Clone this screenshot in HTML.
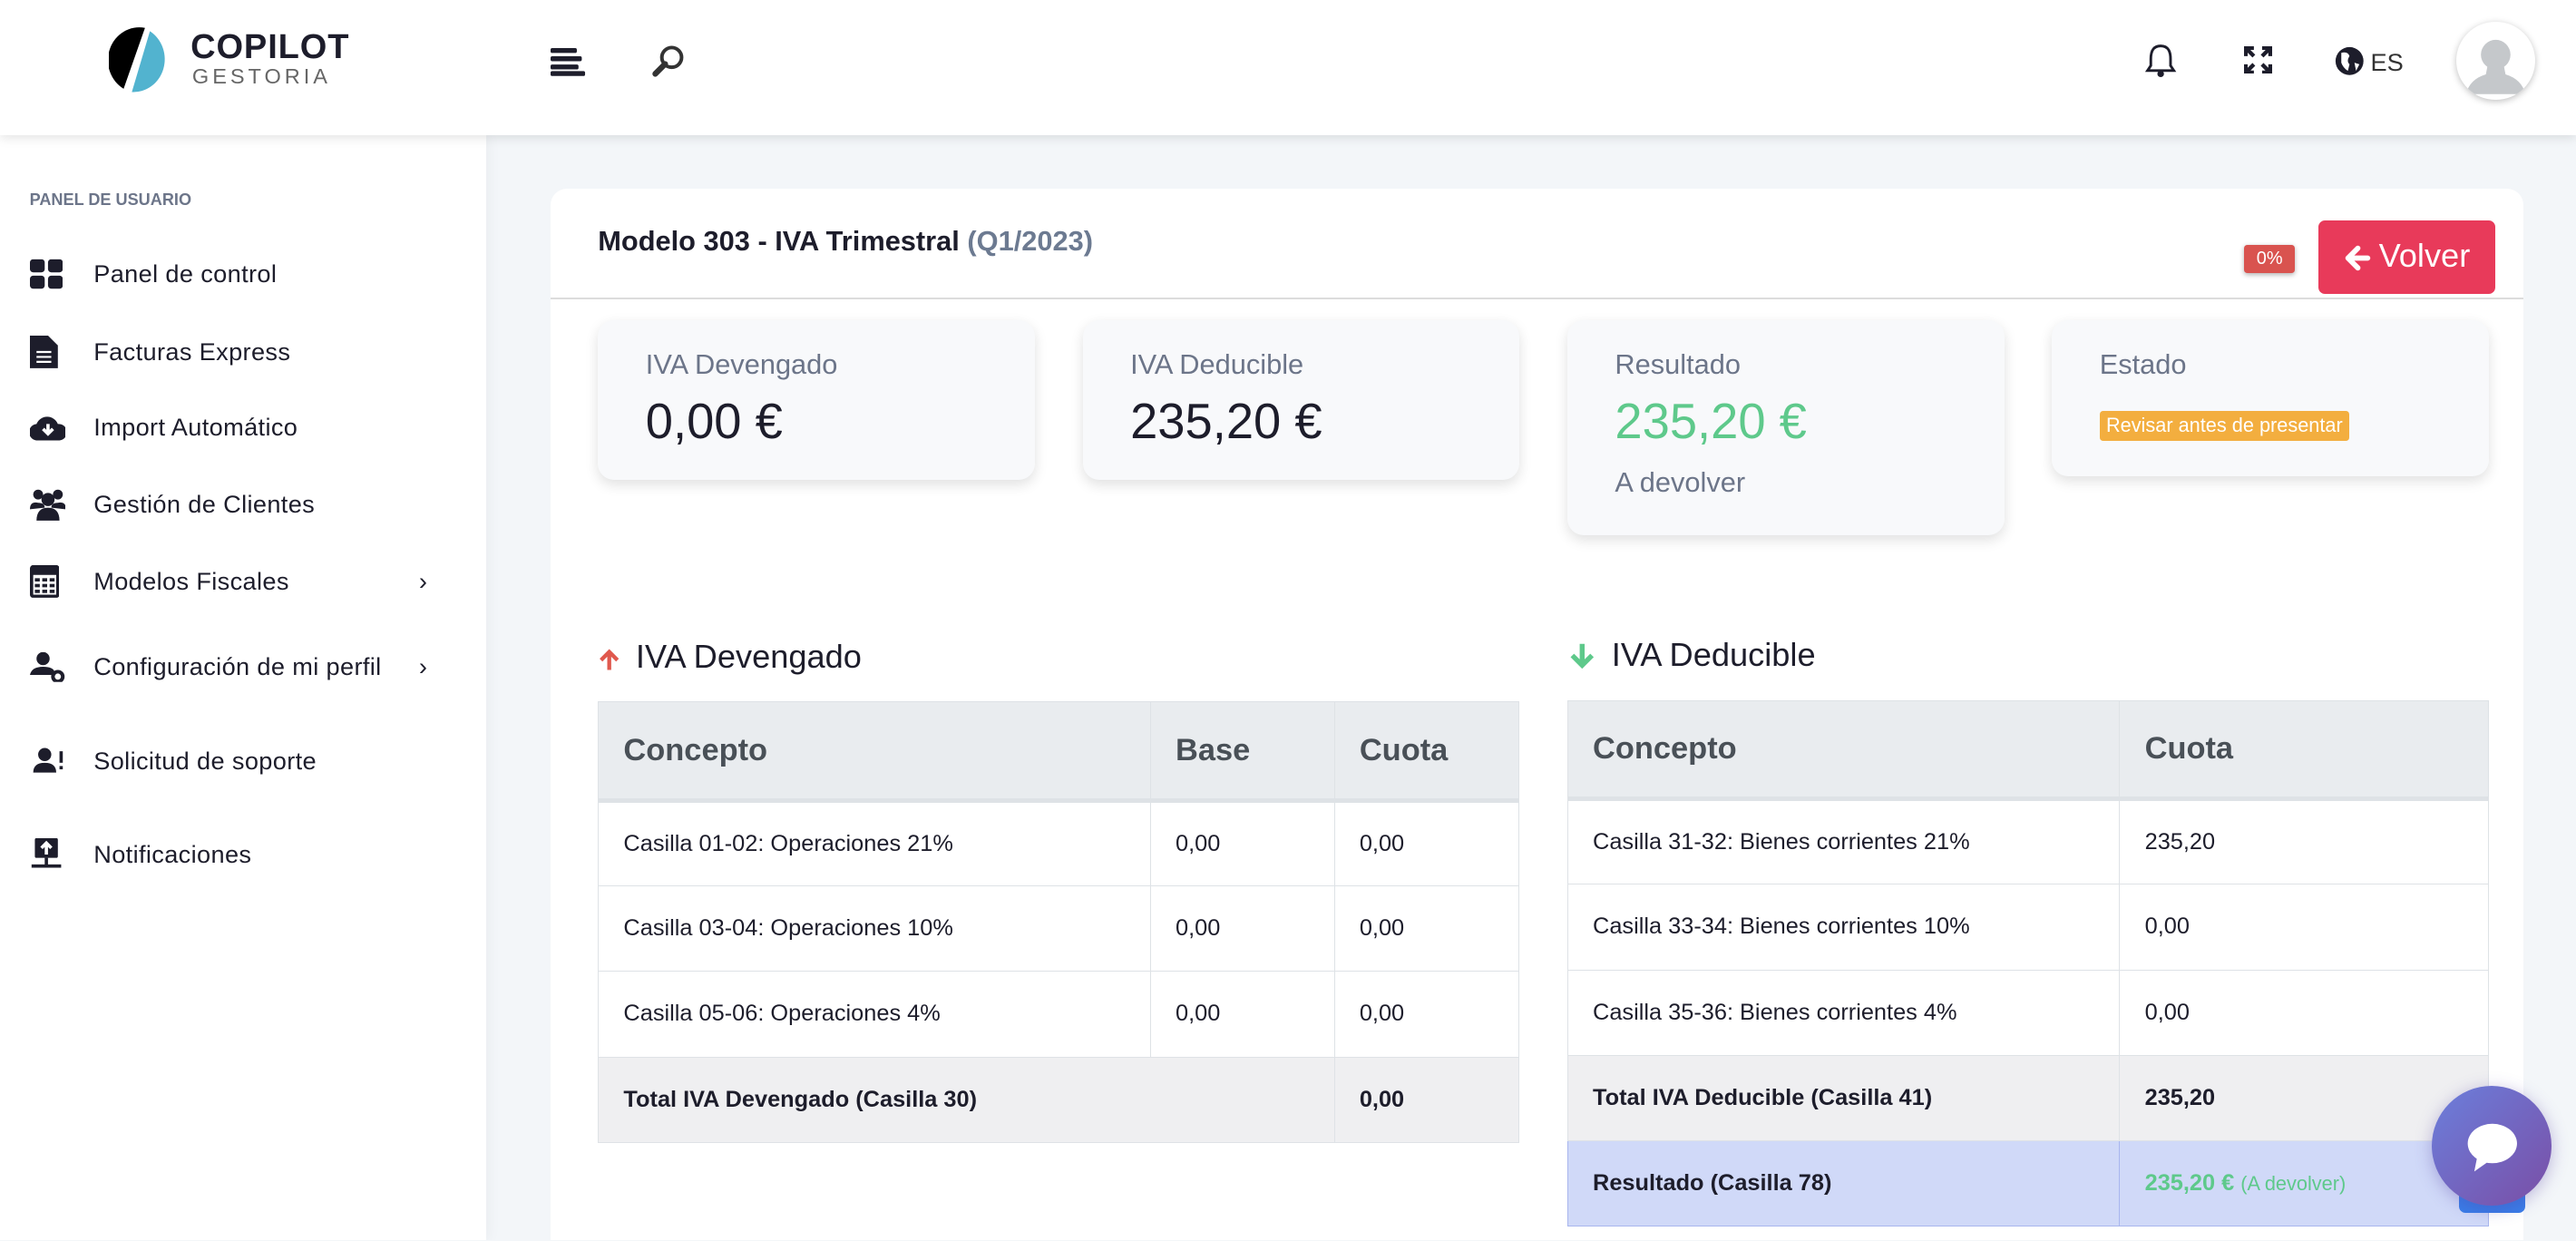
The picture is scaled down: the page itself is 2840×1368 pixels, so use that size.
<!DOCTYPE html>
<html><head><meta charset="utf-8"><style>
*{margin:0;padding:0;box-sizing:border-box}
html,body{width:2840px;height:1368px;overflow:hidden;background:#f3f6f9}
#z{zoom:1.8112;width:1568px;height:755px;position:relative;font-family:"Liberation Sans",sans-serif;color:#1d1d2b;overflow:hidden}
.a{position:absolute}
.hdr{left:0;top:0;width:1568px;height:82px;background:#fff;box-shadow:0 2px 6px rgba(0,0,0,.1);z-index:3}
.side{left:0;top:82px;width:296px;height:673px;background:#fff;box-shadow:2px 0 8px rgba(0,0,0,.04)}
.mi{position:absolute;left:57px;font-size:15px;color:#1d1d2b;transform:translateY(-50%);letter-spacing:.2px}
.ic{position:absolute;left:18px;transform:translateY(-50%)}
.chev{position:absolute;left:255px;font-size:15px;transform:translateY(-50%)}
.card{left:335px;top:115px;width:1201px;height:660px;background:#fff;border-radius:10px}
.st{position:absolute;top:195px;width:266px;background:#f8f9fb;border-radius:10px;box-shadow:0 3px 8px rgba(0,0,0,.12)}
.st .l{position:absolute;left:29px;top:17px;font-size:17px;color:#6c7589}
.st .v{position:absolute;left:29px;top:44px;font-size:30px;color:#1d1d2b}
table{position:absolute;border-collapse:collapse;font-size:14px}
td,th{border:1px solid #dee2e6;padding:0 15px;text-align:left;vertical-align:middle}
th{background:#e9ecef;height:60px;font-size:19px;color:#495057;border-bottom:3px solid #dee2e6}
td{height:52px;background:#fff}
tr.t td{background:#efeff1;font-weight:bold}
tr.r td{background:#d0d9f8;border-color:#a8b6ee;font-weight:bold}
</style></head><body><div id="z">
<div class="a hdr">
 <svg class="a" style="left:66px;top:16px" width="42" height="42" viewBox="0 0 42 42"><path d="M22 1 A19 20 0 0 0 9 38 Z" fill="#000"/><path d="M25 3 A19 20 0 0 1 14 40 Z" fill="#52b3cf"/></svg>
 <div class="a" style="left:116px;top:17px;font-size:21px;font-weight:bold;letter-spacing:.5px">COPILOT</div>
 <div class="a" style="left:117px;top:39px;font-size:13px;color:#666;letter-spacing:2.2px">GESTORIA</div>
 <svg class="a" style="left:335px;top:29px" width="22" height="18"><rect x="0" y="0" width="16" height="3" rx="1" fill="#1d1d2b"/><rect x="0" y="5" width="19" height="3" rx="1" fill="#1d1d2b"/><rect x="0" y="10" width="17" height="3" rx="1" fill="#1d1d2b"/><rect x="0" y="14" width="21" height="3" rx="1" fill="#1d1d2b"/></svg>
 <svg class="a" style="left:396px;top:26px" width="22" height="22"><circle cx="13" cy="9" r="6" fill="none" stroke="#333" stroke-width="2.2"/><path d="M9 13 L3 19" stroke="#333" stroke-width="3.5" stroke-linecap="round"/></svg>
 <svg class="a" style="left:1305px;top:26px" width="20" height="22"><path d="M10 2 C5 2 4 6 4 10 L4 14 L2 17 L18 17 L16 14 L16 10 C16 6 15 2 10 2 Z" fill="none" stroke="#1d1d2b" stroke-width="1.6"/><circle cx="10" cy="19" r="2" fill="#1d1d2b"/></svg>
 <svg class="a" style="left:1366px;top:28px" width="17" height="17" fill="none" stroke="#1d1d2b" stroke-width="2.4"><path d="M1 6V1h5M11 1h5v5M16 11v5h-5M6 16H1v-5M2 2l4 4M15 2l-4 4M15 15l-4-4M2 15l4-4"/></svg>
 <svg class="a" style="left:1421px;top:28px" width="18" height="18"><circle cx="9" cy="9" r="8.5" fill="#1d1d2b"/><path d="M4 4 Q8 3 9 6 Q7 9 9 11 L8 15 Q5 13 4 10 Z M12 10 L15 11 L13 15 Z" fill="#fff"/></svg>
 <div class="a" style="left:1443px;top:29px;font-size:15px;color:#333">ES</div>
 <div class="a" style="left:1495px;top:13px;width:48px;height:48px;border-radius:50%;background:#fff;box-shadow:0 1px 4px rgba(0,0,0,.25);overflow:hidden">
  <svg width="48" height="48"><circle cx="24" cy="20" r="9" fill="#c5c8cb"/><path d="M19 27 L29 27 L30 32 Q40 35 42 44 L6 44 Q8 35 18 32 Z" fill="#c5c8cb"/></svg></div>
</div>
<div class="a side">
 <div class="a" style="left:18px;top:34px;font-size:10px;font-weight:bold;color:#6c7589">PANEL DE USUARIO</div>
</div>
<div class="a" style="left:0;top:0;width:296px;height:755px">
 <svg class="ic" style="top:167px" width="20" height="18"><rect x="0" y="0" width="9" height="8" rx="2" fill="#1d1d2b"/><rect x="11" y="0" width="9" height="8" rx="2" fill="#1d1d2b"/><rect x="0" y="10" width="9" height="8" rx="2" fill="#1d1d2b"/><rect x="11" y="10" width="9" height="8" rx="2" fill="#1d1d2b"/></svg><div class="mi" style="top:167px">Panel de control</div>
 <svg class="ic" style="top:214px" width="18" height="20"><path d="M0 0h11l6 6v14H0z" fill="#1d1d2b"/><path d="M4 10h9M4 13h9M4 16h9" stroke="#fff" stroke-width="1.2"/></svg><div class="mi" style="top:214px">Facturas Express</div>
 <svg class="ic" style="top:260px" width="22" height="16"><path d="M5 16 A5 5 0 0 1 4 6 A7 7 0 0 1 17 6 A5 5 0 0 1 18 16 Z" fill="#1d1d2b"/><path d="M11 6v6M8 9l3 3 3-3" stroke="#fff" stroke-width="2" fill="none"/></svg><div class="mi" style="top:260px">Import Automático</div>
 <svg class="ic" style="top:307px" width="22" height="20"><circle cx="5" cy="4" r="3" fill="#1d1d2b"/><circle cx="17" cy="4" r="3" fill="#1d1d2b"/><circle cx="11" cy="7" r="4" fill="#1d1d2b"/><path d="M0 13 Q0 8 5 9 Q9 9 9 12 Z M13 12 Q13 9 17 9 Q22 8 22 13Z M4 20 Q4 12 11 12 Q18 12 18 20Z" fill="#1d1d2b"/></svg><div class="mi" style="top:307px">Gestión de Clientes</div>
 <svg class="ic" style="top:354px" width="18" height="20"><rect x="1" y="1" width="16" height="18" rx="1" fill="none" stroke="#1d1d2b" stroke-width="2"/><rect x="1" y="1" width="16" height="5" fill="#1d1d2b"/><g fill="#1d1d2b"><rect x="3" y="8" width="3" height="2"/><rect x="7.5" y="8" width="3" height="2"/><rect x="12" y="8" width="3" height="2"/><rect x="3" y="11.5" width="3" height="2"/><rect x="7.5" y="11.5" width="3" height="2"/><rect x="12" y="11.5" width="3" height="2"/><rect x="3" y="15" width="3" height="2"/><rect x="7.5" y="15" width="3" height="2"/><rect x="12" y="15" width="3" height="2"/></g></svg><div class="mi" style="top:354px">Modelos Fiscales</div><div class="chev" style="top:354px">›</div>
 <svg class="ic" style="top:406px" width="22" height="18"><circle cx="8" cy="4" r="4" fill="#1d1d2b"/><path d="M0 14 Q1 9 8 9 Q14 9 15 12 L15 14Z" fill="#1d1d2b"/><circle cx="17" cy="15" r="3" fill="none" stroke="#1d1d2b" stroke-width="2.2"/></svg><div class="mi" style="top:406px">Configuración de mi perfil</div><div class="chev" style="top:406px">›</div>
 <svg class="ic" style="top:463px" width="22" height="16"><circle cx="9" cy="4" r="4" fill="#1d1d2b"/><path d="M2 15 Q2 9 9 9 Q16 9 16 15Z" fill="#1d1d2b"/><rect x="18" y="2" width="2" height="7" fill="#1d1d2b"/><rect x="18" y="11" width="2" height="2" fill="#1d1d2b"/></svg><div class="mi" style="top:463px">Solicitud de soporte</div>
 <svg class="ic" style="top:520px" width="20" height="20"><rect x="3" y="0" width="14" height="12" rx="1" fill="#1d1d2b"/><path d="M10 10V3M7 6l3-3 3 3" stroke="#fff" stroke-width="2" fill="none"/><path d="M10 12v5M1 17h18" stroke="#1d1d2b" stroke-width="2"/></svg><div class="mi" style="top:520px">Notificaciones</div>
</div>
<div class="a card">
 <div class="a" style="left:29px;top:22px;font-size:17px;font-weight:bold">Modelo 303 - IVA Trimestral <span style="color:#6c7a91">(Q1/2023)</span></div>
 <div class="a" style="left:0;top:66px;width:1201px;height:1px;background:#dcdcdc"></div>
 <div class="a" style="left:1031px;top:34px;width:31px;height:17px;background:#d9534f;color:#fff;font-size:11px;text-align:center;line-height:17px;border-radius:2px;box-shadow:0 1px 3px rgba(0,0,0,.3)">0%</div>
 <div class="a" style="left:1076px;top:19px;width:108px;height:45px;background:#e83a5a;border-radius:4px">
  <svg class="a" style="left:16px;top:15px" width="16" height="16"><path d="M14 8H3M8 2L2 8l6 6" stroke="#fff" stroke-width="3.2" fill="none" stroke-linecap="round" stroke-linejoin="round"/></svg>
  <div class="a" style="left:37px;top:10px;color:#fff;font-size:20px;white-space:nowrap">Volver</div>
 </div>
</div>
<div class="st" style="left:364px;height:97px"><div class="l">IVA Devengado</div><div class="v">0,00 €</div></div>
<div class="st" style="left:659px;height:97px"><div class="l">IVA Deducible</div><div class="v">235,20 €</div></div>
<div class="st" style="left:954px;height:131px"><div class="l">Resultado</div><div class="v" style="color:#5ec98b">235,20 €</div><div class="l" style="top:89px">A devolver</div></div>
<div class="st" style="left:1249px;height:95px"><div class="l">Estado</div><div class="a" style="left:29px;top:55px;background:#f3ae3f;color:#fff;font-size:12px;padding:2px 4px;border-radius:2px">Revisar antes de presentar</div></div>
<svg class="a" style="left:364px;top:395px" width="14" height="14"><path d="M7 13V3M2 7l5-5 5 5" stroke="#e0584d" stroke-width="2.4" fill="none"/></svg>
<div class="a" style="left:387px;top:388px;font-size:20px">IVA Devengado</div>
<svg class="a" style="left:954px;top:391px" width="18" height="16"><path d="M9 1v13M3 8l6 6 6-6" stroke="#5ec98b" stroke-width="3" fill="none"/></svg>
<div class="a" style="left:981px;top:387px;font-size:20px">IVA Deducible</div>
<table style="left:364px;top:427px;width:561px">
<tr><th style="width:336px">Concepto</th><th style="width:112px">Base</th><th>Cuota</th></tr>
<tr><td>Casilla 01-02: Operaciones 21%</td><td>0,00</td><td>0,00</td></tr>
<tr><td>Casilla 03-04: Operaciones 10%</td><td>0,00</td><td>0,00</td></tr>
<tr><td>Casilla 05-06: Operaciones 4%</td><td>0,00</td><td>0,00</td></tr>
<tr class="t"><td colspan="2">Total IVA Devengado (Casilla 30)</td><td>0,00</td></tr>
</table>
<table style="left:954px;top:426px;width:561px">
<tr><th style="width:336px">Concepto</th><th>Cuota</th></tr>
<tr><td>Casilla 31-32: Bienes corrientes 21%</td><td>235,20</td></tr>
<tr><td>Casilla 33-34: Bienes corrientes 10%</td><td>0,00</td></tr>
<tr><td>Casilla 35-36: Bienes corrientes 4%</td><td>0,00</td></tr>
<tr class="t"><td>Total IVA Deducible (Casilla 41)</td><td>235,20</td></tr>
<tr class="r"><td>Resultado (Casilla 78)</td><td style="color:#5ec98b">235,20 € <span style="font-weight:normal;font-size:12px">(A devolver)</span></td></tr>
</table>
<div class="a" style="left:1497px;top:700px;width:40px;height:38px;background:#3a7de8;border-radius:4px"></div>
<div class="a" style="left:1480px;top:661px;width:73px;height:73px;border-radius:50%;background:linear-gradient(135deg,#6b7fdc,#7a4ea6);box-shadow:0 2px 10px rgba(80,60,160,.35)">
 <svg style="position:absolute;left:20px;top:22px" width="34" height="32"><ellipse cx="17" cy="13" rx="15" ry="12" fill="#fff"/><path d="M8 20 L6 30 L16 23Z" fill="#fff"/></svg></div>
</div></body></html>
